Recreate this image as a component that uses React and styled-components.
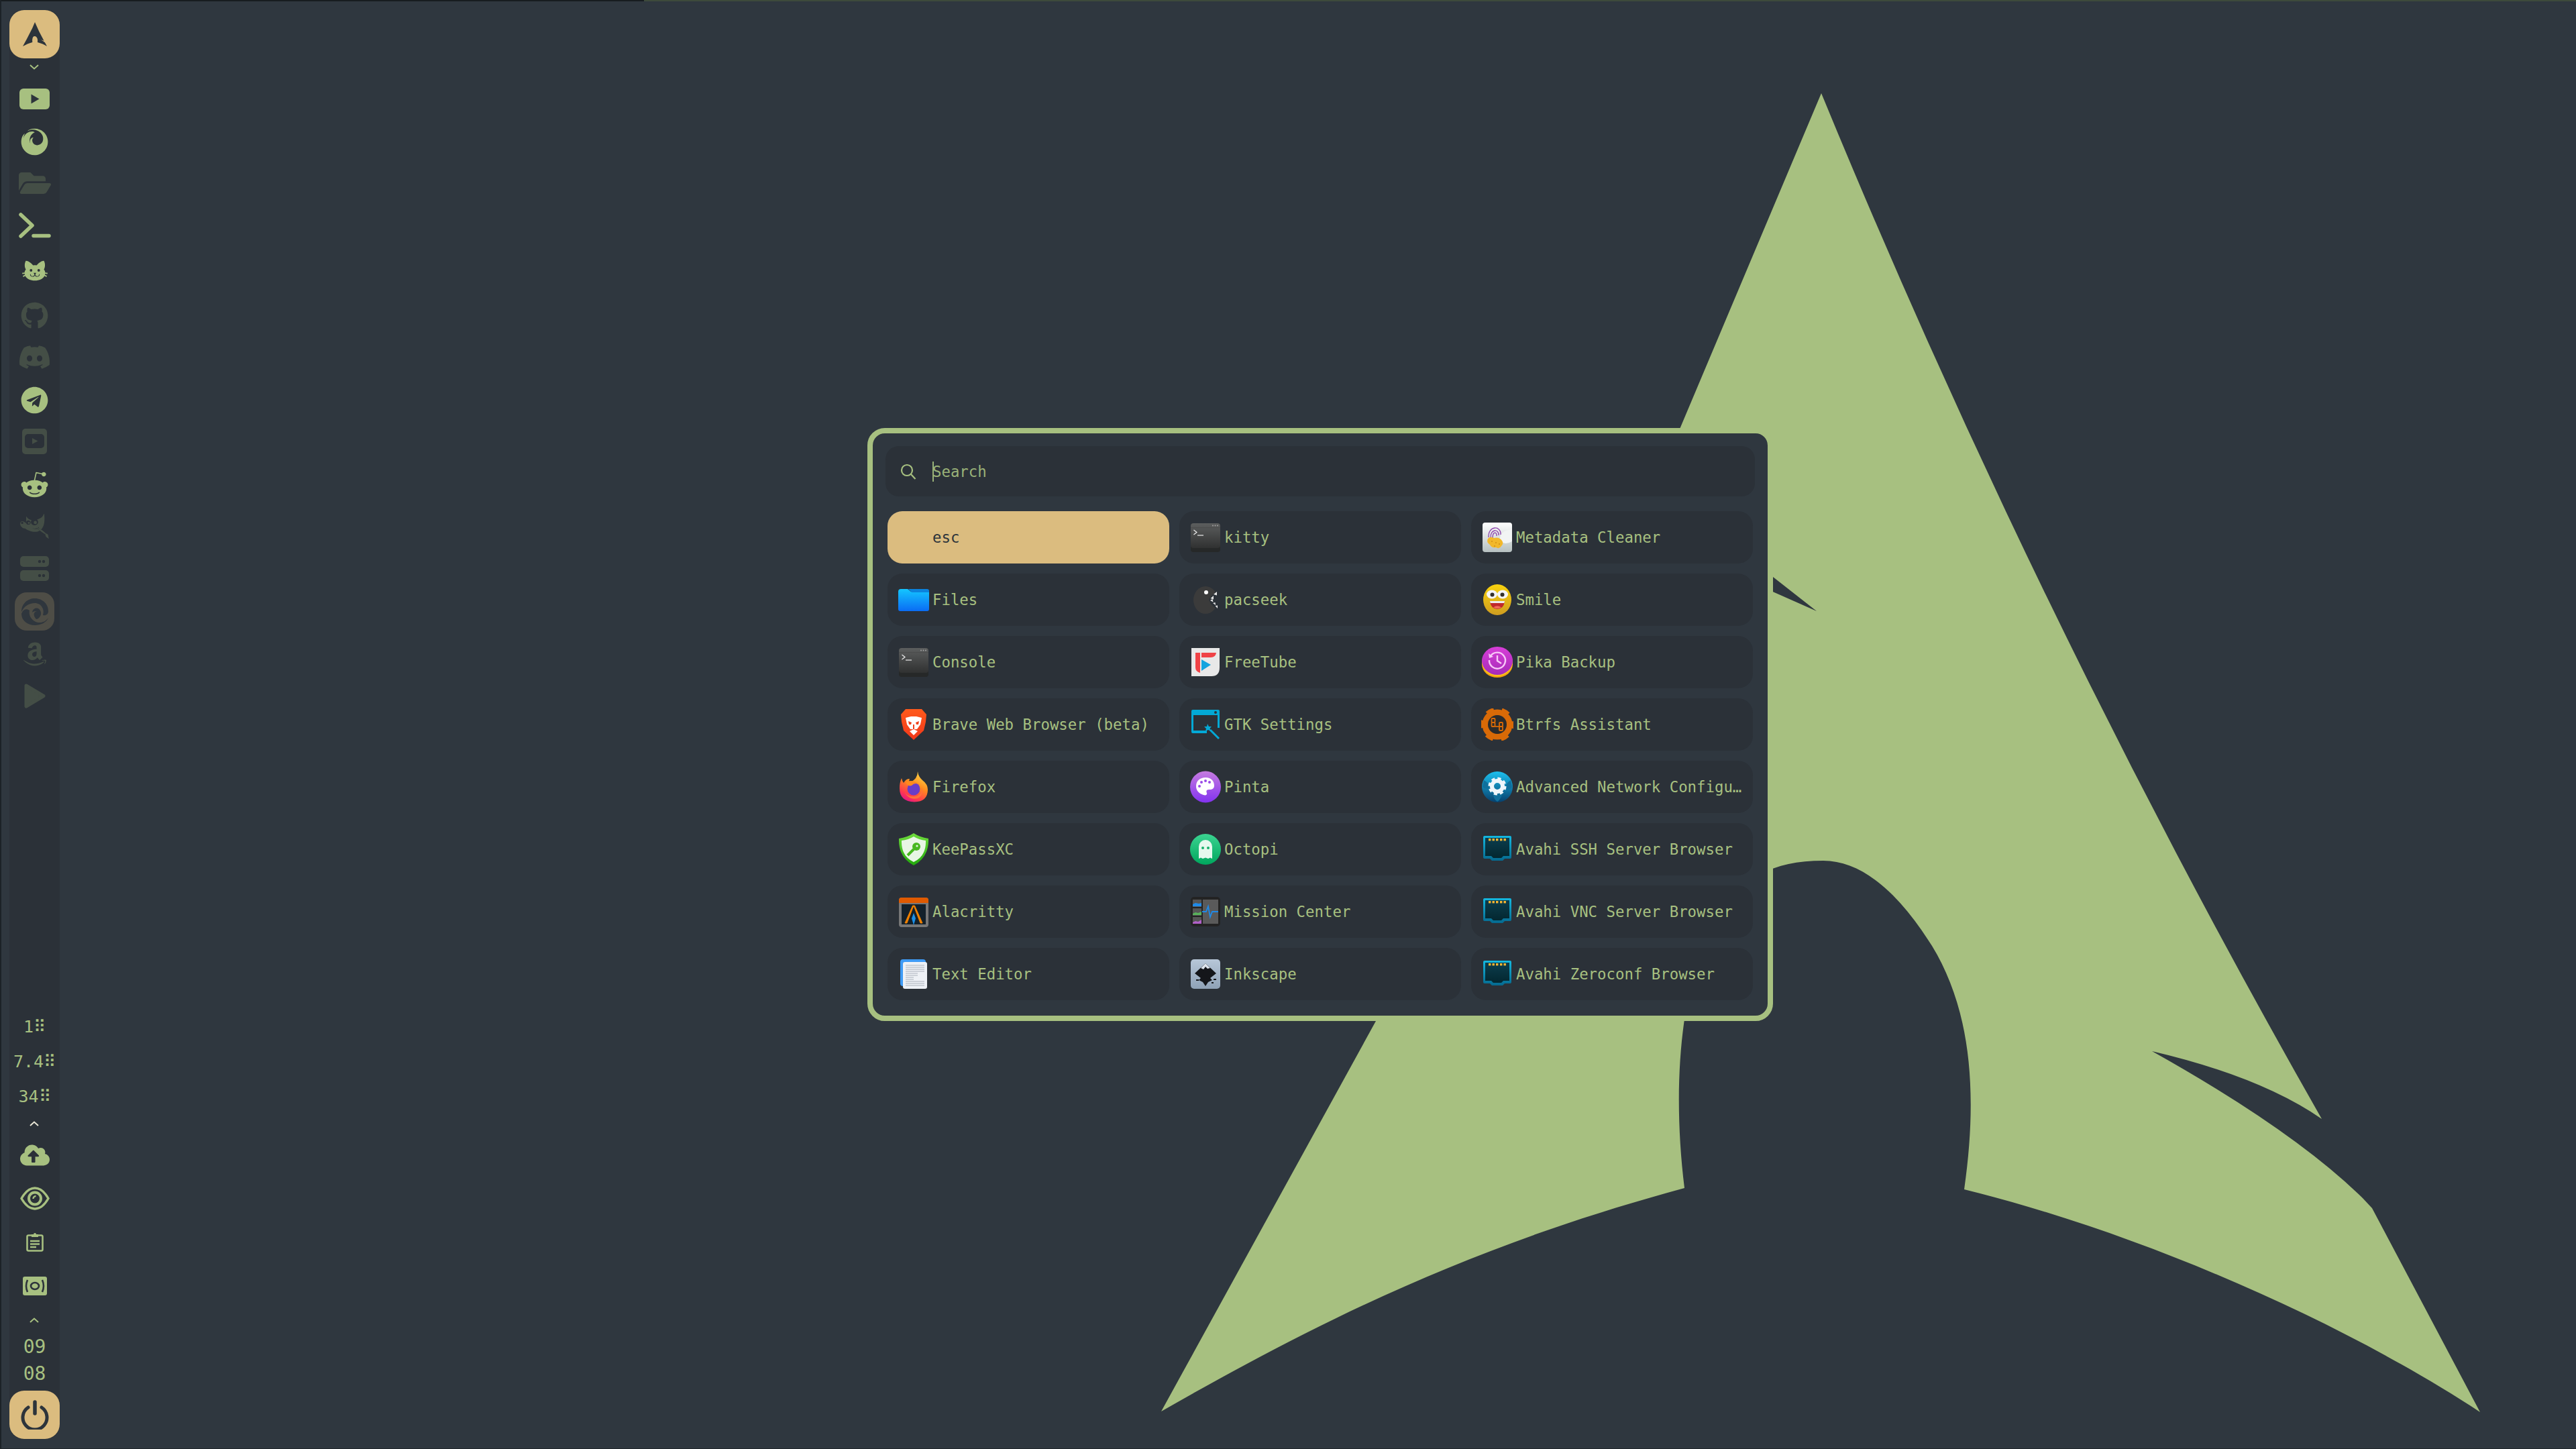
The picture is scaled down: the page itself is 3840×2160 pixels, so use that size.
import React from 'react';
import styled, { createGlobalStyle } from 'styled-components';
import { FaFolderOpen, FaGithub, FaDiscord, FaTelegram, FaAmazon, FaFirefox, FaRedditAlien, FaCloudUploadAlt } from 'react-icons/fa';
import { SiGimp } from 'react-icons/si';

const BG = '#2f373f';
const PANEL = '#2b3138';
const GREEN = '#a7c080';
const YELLOW = '#dbbc7f';
const DIM = '#444e46';
const INK = '#2d343b';
const MONO = '"DejaVu Sans Mono", "Liberation Mono", monospace';

const ARCH = 'M2715,139 Q3039,927 3461,1668 Q3370,1605 3208,1567 Q3419,1685 3522,1786 L3536,1801 L3697,2105 C3500,1975 3200,1840 2928,1773 C2950,1620 2935,1500 2880,1410 C2830,1330 2775,1283 2718,1283 C2640,1283 2600,1310 2560,1360 C2510,1450 2490,1600 2511,1771 C2220,1850 2000,1950 1731,2104 L2051,1522 L2505,637 Z';

const Global = createGlobalStyle`
  html, body { margin: 0; padding: 0; background: ${BG}; }
  body { font-family: ${MONO}; }
`;

const Desktop = styled.div`
  position: relative;
  width: 3840px;
  height: 2160px;
  overflow: hidden;
  background: ${BG};
  display: flex;
`;
const Wallpaper = styled.svg`
  position: absolute;
  inset: 0;
  width: 3840px;
  height: 2160px;
`;
const TopStrip = styled.div`
  position: absolute;
  top: 0;
  left: 0;
  right: 0;
  height: 2px;
  display: grid;
  grid-template-columns: 960px 1fr;
  z-index: 3;
`;
const StripPart = styled.div`
  background: ${p => p.$c};
`;
const LeftStrip = styled.div`
  position: absolute;
  top: 0;
  bottom: 0;
  left: 0;
  width: 2px;
  background: #1c2227;
  z-index: 3;
`;
const BottomStrip = styled.div`
  position: absolute;
  bottom: 0;
  left: 0;
  right: 0;
  height: 1px;
  background: #20262b;
  z-index: 3;
`;

const Sidebar = styled.aside`
  position: relative;
  flex: none;
  width: 75px;
  height: 2130px;
  margin: 15px 7px 15px 14px;
  background: ${PANEL};
  display: flex;
  flex-direction: column;
  align-items: stretch;
  border-radius: 20px;
`;
const AccentButton = styled.div`
  flex: none;
  height: 72px;
  background: ${YELLOW};
  color: ${INK};
  border-radius: 22px;
  display: flex;
  align-items: center;
  justify-content: center;
`;
const Slot = styled.div`
  flex: none;
  height: ${p => p.$h}px;
  display: flex;
  align-items: center;
  justify-content: center;
  color: ${p => (p.$dim ? DIM : p.$white ? '#e9e6d6' : GREEN)};
`;
const HighlightSlot = styled.div`
  flex: none;
  width: 59px;
  height: 57px;
  margin: 0 8px;
  border-radius: 18px;
  background: #4e4d46;
  color: #2f363d;
  display: flex;
  align-items: center;
  justify-content: center;
`;
const StatText = styled.span`
  font-family: ${MONO};
  font-size: 25px;
  line-height: 1;
  white-space: nowrap;
`;
const ClockText = styled.span`
  font-family: ${MONO};
  font-size: 28px;
  line-height: 1;
`;
const SidebarBottom = styled.div`
  margin-top: auto;
  display: flex;
  flex-direction: column;
`;
const PowerGap = styled.div`
  height: 5px;
`;
const ChevronMark = styled.svg`
  margin-right: 2px;
`;

const Stage = styled.main`
  position: relative;
  flex: 1;
  display: flex;
  align-items: center;
  justify-content: center;
`;
const Launcher = styled.section`
  box-sizing: border-box;
  width: 1350px;
  height: 884px;
  border: 8px solid ${GREEN};
  border-radius: 26px;
  background: ${BG};
  padding: 19px 19px 22px;
  display: flex;
  flex-direction: column;
`;
const SearchBar = styled.div`
  flex: none;
  height: 75px;
  box-sizing: border-box;
  background: ${PANEL};
  border-radius: 20px;
  padding-left: 22px;
  display: flex;
  align-items: center;
  gap: 24px;
  color: ${GREEN};
`;
const SearchText = styled.span`
  position: relative;
  font-size: 22.35px;
  line-height: 30px;
  opacity: 0.9;
  &::before {
    content: '';
    position: absolute;
    left: 0;
    top: 0;
    width: 2px;
    height: 30px;
    background: ${GREEN};
  }
`;
const Grid = styled.div`
  margin: 22px 3px 0;
  display: grid;
  grid-auto-flow: column;
  grid-template-columns: repeat(3, 420px);
  grid-template-rows: repeat(8, 78px);
  gap: 15px;
`;
const Row = styled.div`
  box-sizing: border-box;
  min-width: 0;
  padding: 0 15px;
  border-radius: 22px;
  background: ${p => (p.$active ? YELLOW : PANEL)};
  color: ${p => (p.$active ? INK : GREEN)};
  display: flex;
  align-items: center;
  gap: 4px;
`;
const IconBox = styled.span`
  flex: none;
  width: 48px;
  height: 48px;
  display: block;
  & > svg { display: block; }
`;
const Label = styled.span`
  flex: 1;
  min-width: 0;
  font-size: 22.35px;
  line-height: 30px;
  white-space: nowrap;
`;

const Svg48 = ({ children }) => <svg width="48" height="48" viewBox="0 0 48 48">{children}</svg>;

const Grad = ({ id, a, b }) => (
  <defs>
    <linearGradient id={id} x1="0" y1="0" x2="0" y2="1">
      <stop offset="0" stopColor={a} />
      <stop offset="1" stopColor={b} />
    </linearGradient>
  </defs>
);

const Terminal = () => (
  <Svg48>
    <Grad id="tg" a="#5c5e5e" b="#303131" />
    <rect x="2" y="3" width="44" height="43" rx="4" fill="#262828" />
    <rect x="2" y="3" width="44" height="37" rx="4" fill="url(#tg)" />
    <rect x="2" y="9.5" width="44" height="0.6" fill="#444" />
    <circle cx="35" cy="6.5" r="0.9" fill="#aaa" /><circle cx="38.5" cy="6.5" r="0.9" fill="#aaa" /><circle cx="42" cy="6.5" r="0.9" fill="#aaa" />
    <path d="M6.5 13 L11 16.5 L6.5 20" fill="none" stroke="#eee" strokeWidth="1.2" />
    <path d="M12 21 H21" stroke="#eee" strokeWidth="1.2" />
  </Svg48>
);
const Files = () => (
  <Svg48>
    <Grad id="fg" a="#14c6ff" b="#0a6cf4" />
    <path d="M1 12 a4 4 0 0 1 4 -4 H15 L20 12 H47 V38 a3 3 0 0 1 -3 3 H4 a3 3 0 0 1 -3 -3Z" fill="url(#fg)" />
    <path d="M16 8 H44 a3 3 0 0 1 3 3 V13 H21 Z" fill="#0b82dd" />
  </Svg48>
);
const Pacseek = () => (
  <Svg48>
    <ellipse cx="24" cy="24.5" rx="18" ry="20.5" fill="#3b3b3b" />
    <path d="M43 9 L32 19 L29 24 L32 30 L43 41 Z" fill="#2b3138" />
    <circle cx="25" cy="13" r="3" fill="#fff" />
    <path d="M41 12 L36 16 L41 17.5Z M36 18 L31.5 22 L36 23.5Z M31 25 L35.5 27.5 L34.5 23Z M35 29 L39 32 L38.5 28Z M38.5 33 L42 37 L42 32.5Z" fill="#e6e6e6" />
  </Svg48>
);
const Metadata = () => (
  <Svg48>
    <Grad id="mg" a="#ffffff" b="#b6c0c0" />
    <rect x="2" y="2" width="44" height="44" rx="4" fill="url(#mg)" />
    <path d="M46 12 Q26 14 28 30 Q36 36 46 30Z" fill="#f2f4f4" />
    <g fill="none" stroke="#8e44ad" strokeWidth="1.3">
      <path d="M11 24 C10 6 30 6 29 20" /><path d="M14 25 C13 11 27 11 26 21" /><path d="M17 25 C17 15 23.5 15 23 22" />
    </g>
    <path d="M10 26 Q13 22 19 25 Q27 23 31 29 Q34 33 30 37 Q27 42 22 39 Q15 40 13 35 Q7 31 10 26Z" fill="#f2b82a" />
    <g fill="#d08f14"><circle cx="16" cy="30" r="1" /><circle cx="22" cy="32" r="1" /><circle cx="27" cy="34" r="1" /><circle cx="20" cy="37" r="1" /></g>
  </Svg48>
);
const Smile = () => (
  <Svg48>
    <Grad id="sg" a="#f8d20e" b="#cf9d20" />
    <ellipse cx="24" cy="24" rx="21" ry="23" fill="url(#sg)" />
    <ellipse cx="16" cy="16" rx="8" ry="6.5" fill="#f5f5f5" /><ellipse cx="32" cy="16" rx="8" ry="6.5" fill="#f5f5f5" />
    <circle cx="16.5" cy="16.5" r="3" fill="#33302c" /><circle cx="31.5" cy="16.5" r="3" fill="#33302c" />
    <path d="M13 27 H35 Q33 38 24 38 Q15 38 13 27Z" fill="#c0282b" />
    <path d="M13 26 H35 L34.3 29 H13.7Z" fill="#eee" />
    <path d="M18 35.5 Q24 31 30 35.5 Q24 39 18 35.5Z" fill="#ef6a5a" />
  </Svg48>
);
const FreeTube = () => (
  <Svg48>
    <path d="M3 3 H45 V32 Q45 45 33 45 H3 Z" fill="#e8e8e8" />
    <path d="M9 10 H16 V40 Q9 38 9 32Z" fill="#f04246" />
    <path d="M18 10 H40 Q39 17 32 17 H18Z" fill="#f04246" />
    <path d="M18 20 L32 28 L18 37Z" fill="#14a4df" />
  </Svg48>
);
const Pika = () => (
  <Svg48>
    <Grad id="pg" a="#d83ed8" b="#a52bb8" />
    <ellipse cx="24" cy="27" rx="23" ry="20" fill="#f4a30e" />
    <ellipse cx="24" cy="24" rx="23" ry="20.5" fill="#f9cf1c" />
    <ellipse cx="24" cy="22" rx="23" ry="21" fill="url(#pg)" />
    <path d="M14 15 A12 12 0 1 1 12 21" fill="none" stroke="#f8c8f8" strokeWidth="2.4" />
    <path d="M11 11 L12 18 L18 16Z" fill="#f8c8f8" />
    <path d="M24 14 V22 L30 26" fill="none" stroke="#f8c8f8" strokeWidth="2.4" />
  </Svg48>
);
const Brave = () => (
  <Svg48>
    <Grad id="bg" a="#ff5a1c" b="#f1371a" />
    <path d="M12 1 H36 L43 9 L42 20 L39 33 L24 47 L9 33 L6 20 L5 9 Z" fill="url(#bg)" />
    <path d="M12 14 L20 12 H28 L36 14 L34 24 L29 31 H19 L14 24Z" fill="#fff" />
    <path d="M16 19 L21 21 L20 24 L17 24Z M32 19 L27 21 L28 24 L31 24Z M23 24 V32 H25 V24Z" fill="#f1421c" />
    <path d="M18 34 L24 31 L30 34 L24 40Z" fill="#fff" />
  </Svg48>
);
const GtkSettings = () => (
  <Svg48>
    <path d="M5 2 H43 a2 2 0 0 1 2 2 V29 H42 V10 H6 V33 H26 V37 H5 a2 2 0 0 1 -2 -2 V4 a2 2 0 0 1 2 -2Z" fill="#03a9d6" />
    <circle cx="39" cy="6" r="2" fill="#2b3138" />
    <path d="M27 23 L29 27 L33 27 L30.5 30 L32 34 L28 32 L24 34 L25 30 L22 27 L26 27Z" fill="#03a9d6" />
    <path d="M31 32 L44 45" stroke="#03a9d6" strokeWidth="3" />
  </Svg48>
);
const Btrfs = () => (
  <Svg48>
    <circle cx="24" cy="24" r="18" fill="none" stroke="#d96a07" strokeWidth="9" />
    <circle cx="24" cy="24" r="18" fill="none" stroke="#d96a07" strokeWidth="15" strokeDasharray="9.1 9.75" strokeDashoffset="4.5" />
    <circle cx="24" cy="24" r="14" fill="#2b2b2b" />
    <g fill="none" stroke="#d96a07" strokeWidth="1.8">
      <rect x="15.5" y="15" width="5" height="6" rx="1" /><rect x="15.5" y="21" width="5" height="6" rx="1" />
      <rect x="27" y="21" width="5" height="6" rx="1" /><rect x="27" y="27" width="5" height="6" rx="1" />
      <path d="M20.5 27 H27" />
    </g>
  </Svg48>
);
const Firefox = () => (
  <Svg48>
    <defs>
      <linearGradient id="ffa" x1="0.8" y1="0" x2="0.3" y2="1">
        <stop offset="0" stopColor="#ffe14a" /><stop offset="0.45" stopColor="#ff8a1e" /><stop offset="0.8" stopColor="#ff3a4e" /><stop offset="1" stopColor="#e31587" />
      </linearGradient>
    </defs>
    <path d="M30 1 Q31 9 37 14 Q45 20 45 28 Q45 46 25 46.5 Q3 46 3 26 Q3 17 6 11 Q7 16 9 18 Q13 11 18 12 Q16 16 19 17 Q30 12 30 1Z" fill="url(#ffa)" />
    <circle cx="24" cy="27" r="9.5" fill="#6a3dc8" />
    <path d="M12 17 Q22 12 31 20 Q25 17 21 22 Q15 24 12 17Z" fill="#ff8a1e" />
    <path d="M8 26 Q12 40 27 38 Q38 35 36 24 Q40 36 30 41 Q15 45 8 26Z" fill="#ff7139" />
  </Svg48>
);
const Pinta = () => (
  <Svg48>
    <Grad id="pn" a="#c67ce0" b="#8232ef" />
    <ellipse cx="24" cy="24" rx="23" ry="23.5" fill="url(#pn)" />
    <path d="M24 10 C33 10 37 16 37 22 C37 28 32 28 29 28 C25 28 25 31 26 33 C27 36 24 37 21 36 C14 34 10 29 10 23 C10 15 16 10 24 10Z" fill="#fff" />
    <g fill="#9a4be8"><circle cx="18" cy="17" r="2" /><circle cx="24" cy="15" r="2" /><circle cx="30" cy="17" r="2" /><circle cx="15" cy="23" r="2" /></g>
  </Svg48>
);
const NetConfig = () => (
  <Svg48>
    <Grad id="ng" a="#1dc0ee" b="#06406e" />
    <circle cx="24" cy="24" r="23" fill="url(#ng)" />
    <path d="M4 14 Q12 18 12 26 Q6 28 2 24Z M44 14 Q34 20 38 28 Q44 28 46 24Z M18 34 Q26 30 32 34 Q28 44 24 46 Q18 42 18 34Z" fill="#0f6f9c" />
    <circle cx="24" cy="23" r="8" fill="none" stroke="#eef6fb" strokeWidth="6" />
    <circle cx="24" cy="23" r="11.5" fill="none" stroke="#eef6fb" strokeWidth="4" strokeDasharray="5 4.03" />
  </Svg48>
);
const KeePass = () => (
  <Svg48>
    <Grad id="kg" a="#6fdc3c" b="#22a80c" />
    <path d="M24 0 Q33 6 46 8 Q47 36 24 48 Q1 36 2 8 Q15 6 24 0Z" fill="url(#kg)" />
    <path d="M24 5 Q32 10 42 11 Q43 34 24 43 Q5 34 6 11 Q16 10 24 5Z" fill="#e8f6e4" />
    <circle cx="28" cy="20" r="6" fill="#47b81f" /><circle cx="29" cy="19" r="1.6" fill="#e8f6e4" />
    <path d="M24 24 L15 33" stroke="#47b81f" strokeWidth="4" />
  </Svg48>
);
const Octopi = () => (
  <Svg48>
    <Grad id="og" a="#3bd391" b="#00a65d" />
    <circle cx="24" cy="24" r="23" fill="url(#og)" />
    <path d="M14 38 V20 a10 10 0 0 1 20 0 V38 L31 36.5 L28 38 L24 36.5 L20 38 L17 36.5Z" fill="#e6f8ee" />
    <circle cx="20" cy="22" r="2" fill="#18b06b" /><circle cx="28" cy="22" r="2" fill="#18b06b" />
  </Svg48>
);
const Avahi = () => (
  <Svg48>
    <Grad id="ag" a="#14b8df" b="#05698f" />
    <Grad id="ah" a="#0c3d4d" b="#032730" />
    <path d="M3 6 a2 2 0 0 1 2 -2 H43 a2 2 0 0 1 2 2 V36 a2 2 0 0 1 -2 2 H35 L32 41 H16 L13 38 H5 a2 2 0 0 1 -2 -2Z" fill="url(#ag)" />
    <path d="M6 7 H42 V34 H33 L30 37 H18 L15 34 H6Z" fill="url(#ah)" />
    <g fill="#f8b733"><rect x="11" y="8" width="3.4" height="3.4" /><rect x="16.5" y="8" width="3.4" height="3.4" /><rect x="22" y="8" width="3.4" height="3.4" /><rect x="28" y="8" width="3.4" height="3.4" /><rect x="33.5" y="8" width="3.4" height="3.4" /></g>
  </Svg48>
);
const Alacritty = () => (
  <Svg48>
    <rect x="2" y="3" width="44" height="44" rx="4" fill="#777" />
    <path d="M2 11 V7 a4 4 0 0 1 4 -4 H42 a4 4 0 0 1 4 4 V11Z" fill="#e05a00" />
    <rect x="6" y="13" width="36" height="30" fill="#14212b" />
    <path d="M24 15 L14 41 H11 L22.5 15 H25.5 L37 41 H34Z" fill="#f08000" stroke="#f08000" />
    <path d="M24 26 L27 34 L24 44 L21 34Z" fill="#1a8fe8" />
  </Svg48>
);
const Mission = () => (
  <Svg48>
    <rect x="2" y="2" width="44" height="44" rx="5" fill="#232323" />
    <rect x="5" y="6" width="13" height="11" fill="#555" /><rect x="5" y="19" width="13" height="11" fill="#555" /><rect x="5" y="32" width="13" height="10" fill="#555" />
    <rect x="20" y="6" width="23" height="36" fill="#5a5a5a" />
    <path d="M5 13 L9 11 L14 12 L18 11 V16 H5Z" fill="#1f8ae8" />
    <path d="M5 27 L9 25 L13 26 L18 24 V29 H5Z" fill="#58b15a" />
    <path d="M5 40 L9 38 L13 39 L18 36 V42 H5Z" fill="#b060c8" />
    <path d="M19 24 H25 L28 16 L31 32 L34 24 H43" fill="none" stroke="#1f8ae8" strokeWidth="1.8" />
  </Svg48>
);
const TextEditor = () => (
  <Svg48>
    <path d="M4 6 a4 4 0 0 1 4 -4 H38 a4 4 0 0 1 4 4 V8 H8 V42 a4 4 0 0 1 -4 -4Z" fill="#3f9bf5" />
    <rect x="8" y="6" width="36" height="40" rx="3" fill="#eef1f6" />
    <g stroke="#aab0ba" strokeWidth="1"><path d="M12 11 H40 M12 14 H40 M12 17 H40 M12 20 H40 M12 23 H30 M12 26 H30 M12 29 H24 M12 32 H24 M12 35 H40 M12 38 H40 M12 41 H40" /></g>
  </Svg48>
);
const Inkscape = () => (
  <Svg48>
    <Grad id="ig" a="#b7c7d8" b="#8fa2b6" />
    <rect x="2" y="2" width="44" height="44" rx="5" fill="url(#ig)" />
    <path d="M24 8 L40 23 L31 30 L34 33 L28 36 L24 42 L20 36 L14 33 L17 30 L8 23Z" fill="#14161a" />
    <path d="M24 8 L31 15 L27 16 L24 13 L21 17 L17 15Z" fill="#dde4ec" />
    <path d="M10 33 H14 M36 32 H40 M33 37 H36" stroke="#14161a" strokeWidth="2" />
  </Svg48>
);

const apps = [
  ['esc', null], ['Files', Files], ['Console', Terminal], ['Brave Web Browser (beta)', Brave],
  ['Firefox', Firefox], ['KeePassXC', KeePass], ['Alacritty', Alacritty], ['Text Editor', TextEditor],
  ['kitty', Terminal], ['pacseek', Pacseek], ['FreeTube', FreeTube], ['GTK Settings', GtkSettings],
  ['Pinta', Pinta], ['Octopi', Octopi], ['Mission Center', Mission], ['Inkscape', Inkscape],
  ['Metadata Cleaner', Metadata], ['Smile', Smile], ['Pika Backup', Pika], ['Btrfs Assistant', Btrfs],
  ['Advanced Network Configu…', NetConfig], ['Avahi SSH Server Browser', Avahi], ['Avahi VNC Server Browser', Avahi], ['Avahi Zeroconf Browser', Avahi],
];

const Chevron = ({ up }) => (
  <ChevronMark width="16" height="10" viewBox="0 0 16 10">
    <path d={up ? 'M2 8 L8 2.5 L14 8' : 'M2 2 L8 7.5 L14 2'} fill="none" stroke="currentColor" strokeWidth="2" />
  </ChevronMark>
);
const YoutubeBox = () => (
  <svg width="45" height="31" viewBox="0 0 45 31">
    <rect width="45" height="31" rx="6" fill="currentColor" />
    <path d="M17.5 8.5 L29.5 15.5 L17.5 22.5Z" fill={INK} />
  </svg>
);
const Prompt = () => (
  <svg width="48" height="38" viewBox="0 0 48 38">
    <path d="M3 3 L20 19 L3 35" fill="none" stroke="currentColor" strokeWidth="5.5" strokeLinecap="round" strokeLinejoin="round" />
    <path d="M22 34.5 H45" stroke="currentColor" strokeWidth="5.5" strokeLinecap="round" />
  </svg>
);
const CatFace = () => (
  <svg width="46" height="46" viewBox="0 0 24 24">
    <path fill="currentColor" d="M12,8L10.67,8.09C9.81,7.07 7.4,4.5 5,4.5C5,4.5 3.03,7.46 4.96,11.41C4.41,12.24 4.07,12.67 4,13.66L2.07,13.95L2.28,14.93L4.04,14.67L4.18,15.38L2.61,16.32L3.08,17.21L4.53,16.32C5.68,18.76 8.59,20 12,20C15.41,20 18.32,18.76 19.47,16.32L20.92,17.21L21.39,16.32L19.82,15.38L19.96,14.67L21.72,14.93L21.93,13.95L20,13.66C19.93,12.67 19.59,12.24 19.04,11.41C20.97,7.46 19,4.5 19,4.5C16.6,4.5 14.19,7.07 13.33,8.09L12,8M9,11A1,1 0 0,1 10,12A1,1 0 0,1 9,13A1,1 0 0,1 8,12A1,1 0 0,1 9,11M15,11A1,1 0 0,1 16,12A1,1 0 0,1 15,13A1,1 0 0,1 14,12A1,1 0 0,1 15,11M11,14H13L12.3,15.39C12.5,16.03 13.06,16.5 13.75,16.5A1.5,1.5 0 0,0 15.25,15H15.75A2,2 0 0,1 13.75,17C13,17 12.35,16.59 12,16V16H12C11.65,16.59 11,17 10.25,17A2,2 0 0,1 8.25,15H8.75A1.5,1.5 0 0,0 10.25,16.5C10.94,16.5 11.5,16.03 11.7,15.39L11,14Z" />
  </svg>
);
const YoutubeSquare = () => (
  <svg width="37" height="38" viewBox="0 0 37 38">
    <rect width="37" height="38" rx="5" fill="currentColor" />
    <rect x="4" y="8" width="29" height="21" rx="5" fill={PANEL} />
    <path d="M15 14 L23.5 18.5 L15 23Z" fill="currentColor" />
  </svg>
);
const Servers = () => (
  <svg width="43" height="37" viewBox="0 0 43 37">
    <rect width="43" height="16" rx="5" fill="currentColor" />
    <rect y="21" width="43" height="16" rx="5" fill="currentColor" />
    <circle cx="29" cy="8" r="2.2" fill={PANEL} /><circle cx="35" cy="8" r="2.2" fill={PANEL} />
    <circle cx="29" cy="29" r="2.2" fill={PANEL} /><circle cx="35" cy="29" r="2.2" fill={PANEL} />
  </svg>
);
const PlayMark = () => (
  <svg width="32" height="37" viewBox="0 0 32 37">
    <path d="M3 3 L29 18.5 L3 34Z" fill="currentColor" stroke="currentColor" strokeWidth="5" strokeLinejoin="round" />
  </svg>
);
const SwirlMark = () => (
  <svg width="42" height="42" viewBox="0 0 42 42">
    <path fill="currentColor" d="M1 21 C1 9 10 1 21 1 C33 1 41 10 41 20 C41 25 37 27 33 26 C36 17 30 8 21 8 C12 8 5 13 1 21Z" />
    <path fill="currentColor" d="M1 24 C3 18 8 15 13 19 C11 29 20 38 29 37 C33 37 37 35 41 30 C38 37 30 41 21 41 C10 41 1 34 1 24Z" />
    <path fill="currentColor" d="M17 22 C18 14 28 13 30 22 C31 27 26 32 23 32 C20 29 19 25 20 23 C21 20 26 20 27 23 C25 20 20 19 17 22Z" />
  </svg>
);
const Eye = () => (
  <svg width="44" height="35" viewBox="0 0 44 35">
    <path d="M2 17.5 C8 7 15 2 22 2 S36 7 42 17.5 C36 28 29 33 22 33 S8 28 2 17.5Z" fill="none" stroke="currentColor" strokeWidth="3.4" />
    <circle cx="22" cy="17.5" r="9" fill="none" stroke="currentColor" strokeWidth="4" />
    <path d="M19.5 18 a4 4 0 0 1 4 -4" fill="none" stroke="currentColor" strokeWidth="2.4" />
  </svg>
);
const Clipboard = () => (
  <svg width="26" height="29" viewBox="0 0 26 29">
    <rect x="1.5" y="4.5" width="23" height="23" rx="2" fill="none" stroke="currentColor" strokeWidth="2.6" />
    <path d="M8 5 V3 H11 a2 2 0 0 1 4 0 H18 V7 H8Z" fill="currentColor" />
    <path d="M6 13 H20 M6 17.5 H20 M6 22 H15" stroke="currentColor" strokeWidth="2.4" />
  </svg>
);
const Capture = () => (
  <svg width="36" height="28" viewBox="0 0 36 28">
    <rect width="36" height="28" rx="3" fill="currentColor" />
    <ellipse cx="18" cy="14" rx="6" ry="5" fill="none" stroke={INK} strokeWidth="2.6" />
    <path d="M7 5 Q3 14 7 23 M29 5 Q33 14 29 23" fill="none" stroke={INK} strokeWidth="2.6" />
  </svg>
);
const Power = () => (
  <svg width="42" height="44" viewBox="0 0 42 44">
    <path d="M11 11 A18 18 0 1 0 31 11" fill="none" stroke={INK} strokeWidth="5" strokeLinecap="round" />
    <path d="M21 3 V20" stroke={INK} strokeWidth="5.5" strokeLinecap="round" />
  </svg>
);
const Lens = () => (
  <svg width="24" height="24" viewBox="0 0 24 24">
    <circle cx="10" cy="10" r="8" fill="none" stroke="currentColor" strokeWidth="2.2" />
    <path d="M16 16 L22.5 23" stroke="currentColor" strokeWidth="2.2" />
  </svg>
);
const ArchMark = ({ size }) => (
  <svg width={size} height={size} viewBox="1731 139 1966 1966">
    <path d={ARCH} fill="currentColor" />
  </svg>
);

export default function App() {
  return (
    <Desktop>
      <Global />
      <Wallpaper viewBox="0 0 3840 2160">
        <path d={ARCH} fill={GREEN} />
        <path d="M2620,842 L2708,911 L2620,872 Z" fill={BG} />
      </Wallpaper>
      <TopStrip><StripPart $c="#171c20" /><StripPart $c="#3d4a3b" /></TopStrip>
      <LeftStrip />
      <BottomStrip />
      <Sidebar>
        <AccentButton><ArchMark size={36} /></AccentButton>
        <Slot $h={26}><Chevron /></Slot>
        <Slot $h={68}><YoutubeBox /></Slot>
        <Slot $h={60}><FaFirefox size={41} /></Slot>
        <Slot $h={64} $dim><FaFolderOpen size={48} /></Slot>
        <Slot $h={62}><Prompt /></Slot>
        <Slot $h={72}><CatFace /></Slot>
        <Slot $h={62} $dim><FaGithub size={41} /></Slot>
        <Slot $h={62} $dim><FaDiscord size={49} /></Slot>
        <Slot $h={66}><FaTelegram size={41} /></Slot>
        <Slot $h={58} $dim><YoutubeSquare /></Slot>
        <Slot $h={70}><FaRedditAlien size={43} /></Slot>
        <Slot $h={54} $dim><SiGimp size={43} /></Slot>
        <Slot $h={72} $dim><Servers /></Slot>
        <HighlightSlot><SwirlMark /></HighlightSlot>
        <Slot $h={70} $dim><FaAmazon size={40} /></Slot>
        <Slot $h={54} $dim><PlayMark /></Slot>
        <SidebarBottom>
          <Slot $h={56}><StatText>1⠿</StatText></Slot>
          <Slot $h={48}><StatText>7.4⠿</StatText></Slot>
          <Slot $h={56}><StatText>34⠿</StatText></Slot>
          <Slot $h={26} $white><Chevron up /></Slot>
          <Slot $h={68}><FaCloudUploadAlt size={44} /></Slot>
          <Slot $h={60}><Eye /></Slot>
          <Slot $h={70}><Clipboard /></Slot>
          <Slot $h={62}><Capture /></Slot>
          <Slot $h={40}><Chevron up /></Slot>
          <Slot $h={40}><ClockText>09</ClockText></Slot>
          <Slot $h={40}><ClockText>08</ClockText></Slot>
          <PowerGap />
          <AccentButton><Power /></AccentButton>
        </SidebarBottom>
      </Sidebar>
      <Stage>
        <Launcher>
          <SearchBar>
            <Lens />
            <SearchText>Search</SearchText>
          </SearchBar>
          <Grid>
            {apps.map(([name, Icon], i) => (
              <Row key={i} $active={name === 'esc'}>
                <IconBox>{Icon && <Icon />}</IconBox>
                <Label>{name}</Label>
              </Row>
            ))}
          </Grid>
        </Launcher>
      </Stage>
    </Desktop>
  );
}
